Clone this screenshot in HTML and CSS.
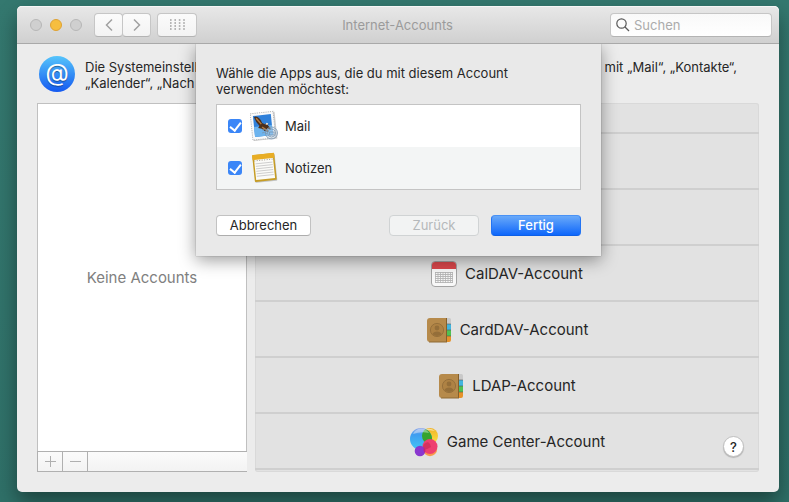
FILE: index.html
```html
<!DOCTYPE html>
<html lang="de">
<head>
    <meta charset="UTF-8">
    <meta name="viewport" content="width=device-width, initial-scale=1.0">
    <title>Internet-Accounts</title>
    <link rel="stylesheet" href="styles.css">
</head>
<body>

    <div class="window">
        <header class="titlebar">
            <div class="lights">
                <span class="light"></span>
                <span class="light light-minimize"></span>
                <span class="light"></span>
            </div>
            <div class="nav">
                <button type="button" class="tool-button" aria-label="Zurück">
                    <svg width="8" height="14" viewBox="0 0 8 14"><path d="M7 1.5 L1.5 7 L7 12.5"/></svg>
                </button>
                <button type="button" class="tool-button" aria-label="Vorwärts">
                    <svg width="8" height="14" viewBox="0 0 8 14"><path d="M1 1.5 L6.5 7 L1 12.5"/></svg>
                </button>
            </div>
            <button type="button" class="tool-button tool-grid" aria-label="Alle einblenden">
                <svg width="15" height="11" viewBox="0 0 15 11">
                    <path d="M0 1H15M0 4H15M0 7H15M0 10H15" stroke-width="1.4" stroke-dasharray="1.6 2.8"/>
                </svg>
            </button>
            <h1 class="title">Internet-Accounts</h1>
            <label class="search">
                <svg width="14" height="14" viewBox="0 0 14 14"><circle cx="5.5" cy="5.5" r="4.7"/><path d="M9 9 L13 13"/></svg>
                <input type="search" placeholder="Suchen" aria-label="Suchen">
            </label>
        </header>

        <main class="content">
            <div class="intro">
                <span class="at-icon">@</span>
                <p>Die Systemeinstell<br>„Kalender“, „Nach</p>
                <p class="intro-end">mit „Mail“, „Kontakte“,</p>
            </div>

            <div class="panes">
                <section class="accounts">
                    <div class="accounts-empty">Keine Accounts</div>
                    <div class="accounts-bar">
                        <button type="button" aria-label="Hinzufügen">
                            <svg width="11" height="11" viewBox="0 0 11 11"><path d="M5.5 0V11M0 5.5H11"/></svg>
                        </button>
                        <button type="button" aria-label="Entfernen">
                            <svg width="11" height="11" viewBox="0 0 11 11"><path d="M0 5.5H11"/></svg>
                        </button>
                    </div>
                </section>

                <section class="providers">
                    <ul class="provider-list">
                        <li class="provider-short"></li>
                        <li></li>
                        <li></li>
                        <li>
                            <button type="button" class="provider">
                                <svg width="26" height="26" viewBox="0 0 26 26">
                                    <rect x=".5" y=".5" width="25" height="25" rx="3.5" fill="#f8f8f8" stroke="#a3a3a3"/>
                                    <path d="M1 8V4Q1 1 4 1H22Q25 1 25 4V8Z" fill="#d9474b"/>
                                    <path d="M4 11.5H22M4 13.5H22M4 15.5H22M4 17.5H22M4 19.5H22M4 21.5H22" stroke="#bbb"/>
                                    <path d="M4.5 11V22M7 11V22M9.5 11V22M12 11V22M14.5 11V22M17 11V22M19.5 11V22M21.5 11V22" stroke="#b4b4b4" stroke-width=".8"/>
                                </svg>
                                <span>CalDAV-Account</span>
                            </button>
                        </li>
                        <li>
                            <button type="button" class="provider">
                                <svg width="26" height="26" viewBox="0 0 26 26">
                                    <rect x="16" y="1" width="9" height="6" rx="1.5" fill="#c9c9c9"/>
                                    <rect x="16" y="7" width="9" height="6" fill="#42b5df"/>
                                    <rect x="16" y="13" width="9" height="6" fill="#4fc252"/>
                                    <path d="M16 19H25V23Q25 25 23 25H16Z" fill="#e6922a"/>
                                    <path d="M20 7H25M20 13H25M20 19H25" stroke="#555" stroke-width=".6"/>
                                    <path d="M4 1H21V25H4Q1 25 1 22V4Q1 1 4 1Z" fill="#b68a4b"/>
                                    <path d="M20.5 1V25" stroke="#85602b"/>
                                    <path d="M3 25H21" stroke="#8f6a34"/>
                                    <circle cx="11" cy="13" r="6.6" fill="#ae8244" stroke="#8f6b38" stroke-width=".8"/>
                                    <circle cx="11" cy="11" r="2.4" fill="#946e39"/>
                                    <path d="M6.5 17Q7.500 14.5 11 14.5T15.500 17Q14 19 11 19T6.500 17Z" fill="#946e39"/>
                                </svg>
                                <span>CardDAV-Account</span>
                            </button>
                        </li>
                        <li>
                            <button type="button" class="provider">
                                <svg width="26" height="26" viewBox="0 0 26 26">
                                    <rect x="16" y="1" width="9" height="6" rx="1.5" fill="#c9c9c9"/>
                                    <rect x="16" y="7" width="9" height="6" fill="#42b5df"/>
                                    <rect x="16" y="13" width="9" height="6" fill="#4fc252"/>
                                    <path d="M16 19H25V23Q25 25 23 25H16Z" fill="#e6922a"/>
                                    <path d="M20 7H25M20 13H25M20 19H25" stroke="#555" stroke-width=".6"/>
                                    <path d="M4 1H21V25H4Q1 25 1 22V4Q1 1 4 1Z" fill="#b68a4b"/>
                                    <path d="M20.5 1V25" stroke="#85602b"/>
                                    <path d="M3 25H21" stroke="#8f6a34"/>
                                    <circle cx="11" cy="13" r="6.6" fill="#ae8244" stroke="#8f6b38" stroke-width=".8"/>
                                    <circle cx="11" cy="11" r="2.4" fill="#946e39"/>
                                    <path d="M6.5 17Q7.500 14.5 11 14.5T15.500 17Q14 19 11 19T6.500 17Z" fill="#946e39"/>
                                </svg>
                                <span>LDAP-Account</span>
                            </button>
                        </li>
                        <li>
                            <button type="button" class="provider">
                                <svg width="30" height="30" viewBox="0 0 30 30">
                                    <defs>
                                        <linearGradient id="gc-blue" x1="0" y1="0" x2="0" y2="1">
                                            <stop offset="0" stop-color="#8fa6e8"/>
                                            <stop offset=".3" stop-color="#3f9df0"/>
                                            <stop offset="1" stop-color="#43c6f5"/>
                                        </linearGradient>
                                        <linearGradient id="gc-yellow" x1="0" y1="0" x2="0" y2="1">
                                            <stop offset="0" stop-color="#f0b429"/>
                                            <stop offset="1" stop-color="#fbe23f"/>
                                        </linearGradient>
                                        <clipPath id="gc-clip"><circle cx="12" cy="12" r="11"/></clipPath>
                                    </defs>
                                    <circle cx="21" cy="9" r="8" fill="url(#gc-yellow)"/>
                                    <circle cx="12" cy="12" r="11" fill="url(#gc-blue)"/>
                                    <circle cx="21" cy="9" r="8" fill="#35a42c" clip-path="url(#gc-clip)"/>
                                    <circle cx="21" cy="22" r="7.2" fill="#f99a4c"/>
                                    <circle cx="21" cy="19.5" r="7.5" fill="#ee3f70"/>
                                    <path d="M14 19Q15 16 19 15Q22 17 22 20Q19 22 15 23Z" fill="#c42853" opacity=".6"/>
                                    <circle cx="11" cy="24" r="5.3" fill="#8a37cf"/>
                                    <path d="M14.5 20Q17 22 16 26Q14 24 14.5 20Z" fill="#c42477"/>
                                    <path d="M4 7Q6 2 12 1.5Q18 2 20 6Q12 4 4 7Z" fill="#fff" opacity=".4"/>
                                    <path d="M16 3Q21 0 26 4Q21 3 16 3Z" fill="#fff" opacity=".5"/>
                                </svg>
                                <span>Game Center-Account</span>
                            </button>
                        </li>
                    </ul>
                    <button type="button" class="help">?</button>
                </section>
            </div>
        </main>

        <form class="sheet" onsubmit="return false">
            <p>Wähle die Apps aus, die du mit diesem Account verwenden möchtest:</p>
            <div class="apps">
                <label class="app">
                    <input type="checkbox" checked>
                    <svg width="28" height="32" viewBox="0 0 28 32">
                        <g transform="rotate(-6 13 16)">
                            <rect x="2" y="3" width="24" height="27" fill="#000" opacity=".2"/>
                            <rect x="1.5" y="2.5" width="23" height="26.5" fill="#fafafa" stroke="#b9b9b9" stroke-dasharray="1.2 1"/>
                            <rect x="4" y="5" width="18" height="21" fill="#2f80da"/>
                            <rect x="4" y="16" width="18" height="10" fill="#6db4ee"/>
                            <path d="M5 6Q8 5 10 8Q12 10 12.5 13L15 14.5Q17 12.5 18.5 14L18 16Q20 18 20.5 20Q18 20 16.5 19L18 22.5Q14 22 11.5 18.5L8 17.5L9.5 15.5Q6 11 5 6Z" fill="#4b2f1c"/>
                            <path d="M7 7.5L11.5 14M12 17L17 21" stroke="#b57a3d" stroke-width="1.4"/>
                            <path d="M15.5 14.5L17 13.2L18.5 14L17.5 15.5Z" fill="#f5f1e8"/>
                        </g>
                        <g fill="none" stroke="#7793ae" stroke-width=".8">
                            <circle cx="21.5" cy="23" r="6" fill="#c4d9ec" fill-opacity=".35"/>
                            <circle cx="21.5" cy="23" r="4"/>
                            <path d="M12 20Q15 18 17 21M12 23Q15 21 17 24M19.500 22H24V25H19.500Z"/>
                        </g>
                    </svg>
                    <span>Mail</span>
                </label>
                <label class="app">
                    <input type="checkbox" checked>
                    <svg width="28" height="32" viewBox="0 0 28 32">
                        <g transform="rotate(-6 14 16)">
                            <rect x="4" y="3" width="22" height="27" rx="1" fill="#000" opacity=".2"/>
                            <rect x="3.5" y="2" width="22" height="27" rx="1" fill="#c79d25"/>
                            <rect x="5" y="6" width="19" height="21" fill="#fbfbf8"/>
                            <path d="M3.5 2H25.5V7H3.5Z" fill="#e8ad24"/>
                            <path d="M5 8H24" stroke="#a09a8a" stroke-dasharray="1 1.5"/>
                            <path d="M6 11H23M6 13.5H23M6 16H23M6 18.5H23M6 21H23M6 23.5H23" stroke="#c4c4c4" stroke-width=".8"/>
                        </g>
                    </svg>
                    <span>Notizen</span>
                </label>
            </div>
            <div class="actions">
                <button type="button" class="push push-cancel">Abbrechen</button>
                <button type="button" class="push" disabled>Zurück</button>
                <button type="submit" class="push push-default">Fertig</button>
            </div>
        </form>
    </div>

</body>
</html>
```

FILE: styles.css
```css
* {
    margin: 0;
    padding: 0;
    box-sizing: border-box;
}

body {
    font-family: Inter, 'Liberation Sans', sans-serif;
    font-size: 13px;
    line-height: 16px;
    color: #262626;
    background: linear-gradient(180deg, #34786f 0%, #2f7068 100%);
    min-height: 100vh;
    padding: 6px 10px 10px 17px;
    display: flex;
    overflow: hidden;
}

button,
input {
    font: inherit;
    color: inherit;
}

svg {
    display: block;
    flex: none;
    fill: none;
}

.window {
    flex: 1;
    display: flex;
    flex-direction: column;
    position: relative;
    background: #ececec;
    border-radius: 5px;
    box-shadow: 0 10px 20px rgba(0, 0, 0, 0.4);
}


.titlebar {
    display: flex;
    align-items: center;
    height: 38px;
    padding: 0 7px 0 13px;
    background: linear-gradient(180deg, #e8e8e8, #d0d0d0);
    border-bottom: 1px solid #a9a9a9;
    border-radius: 5px 5px 0 0;
    box-shadow: inset 0 1px 0 #f6f6f6;
    position: relative;
    z-index: 2;
}

.lights {
    display: flex;
    gap: 8px;
    margin-right: 12px;
}

.light {
    width: 12px;
    height: 12px;
    border-radius: 50%;
    background: #cfcfcf;
    border: 1px solid #b7b7b7;
}

.light-minimize {
    background: #f6be3f;
    border-color: #dfa233;
}

.nav {
    display: flex;
    margin-right: 6px;
}

.tool-button {
    display: flex;
    align-items: center;
    justify-content: center;
    width: 29px;
    height: 24px;
    background: linear-gradient(180deg, #fbfbfb, #f3f3f3);
    border: 1px solid #c6c6c6;
    border-bottom-color: #b4b4b4;
    border-radius: 4px;
    stroke: #a0a0a0;
    stroke-width: 1.5;
}

.nav .tool-button + .tool-button {
    margin-left: -1px;
}

.tool-grid {
    width: 40px;
}

.title {
    flex: 1;
    text-align: center;
    font-size: 13px;
    font-weight: 400;
    color: #9b9b9b;
    padding-left: 17px;
    padding-right: 29px;
}

.search {
    display: flex;
    align-items: center;
    gap: 4px;
    width: 162px;
    height: 24px;
    padding: 0 5px;
    background: linear-gradient(180deg, #f9f9f9, #fff);
    border: 1px solid #c6c6c6;
    border-bottom-color: #b4b4b4;
    border-radius: 4px;
    stroke: #5a5a5a;
    stroke-width: 1.2;
}

.search input {
    flex: 1;
    min-width: 0;
    border: none;
    outline: none;
    background: none;
}

.search input::placeholder {
    color: #ababab;
}


.content {
    flex: 1;
    display: flex;
    flex-direction: column;
    padding: 12px 20px 20px;
}

.intro {
    display: flex;
    gap: 10px;
    height: 47px;
    padding: 0 22px 0 2px;
    white-space: nowrap;
}

.intro p {
    padding-top: 3px;
}

.intro .intro-end {
    margin-left: auto;
}

.at-icon {
    flex: none;
    width: 36px;
    height: 36px;
    border-radius: 50%;
    background: linear-gradient(180deg, #55c4fb, #1459f0);
    color: #fff;
    font-size: 24px;
    line-height: 34px;
    text-align: center;
    text-shadow: 0 1px 1px rgba(0, 0, 0, 0.4);
}

.panes {
    flex: 1;
    display: flex;
    gap: 8px;
}

.accounts {
    display: flex;
    flex-direction: column;
    width: 210px;
}

.accounts-empty {
    flex: 1;
    display: flex;
    align-items: center;
    justify-content: center;
    background: #fff;
    border: 1px solid #c0c0c0;
    border-bottom: none;
    font-size: 15px;
    color: #808080;
}

.accounts-bar {
    display: flex;
    height: 21px;
    background: linear-gradient(180deg, #fbfbfb, #f3f3f3);
    border: 1px solid #b0b0b0;
    border-right: none;
}

.accounts-bar button {
    display: flex;
    align-items: center;
    justify-content: center;
    width: 25px;
    background: none;
    border: none;
    border-right: 1px solid #b0b0b0;
    stroke: #b0b0b0;
}

.providers {
    flex: 1;
    position: relative;
    background: #e2e2e2;
    border-radius: 3px;
    box-shadow: inset 0 0 0 1px #d9d9d9;
}

.provider-list {
    list-style: none;
}

.provider-list li {
    height: 56px;
    border-bottom: 2px solid #cfcfcf;
}

.provider-list .provider-short {
    height: 31px;
}

.provider {
    display: flex;
    align-items: center;
    justify-content: center;
    gap: 8px;
    width: 100%;
    height: 100%;
    padding-top: 2px;
    background: none;
    border: none;
    font-size: 15px;
}

.help {
    position: absolute;
    right: 15px;
    bottom: 15px;
    width: 21px;
    height: 21px;
    border: 1px solid #c0c0c0;
    border-radius: 50%;
    background: #fff;
    box-shadow: 0 1px 1px rgba(0, 0, 0, 0.2);
    font-size: 13px;
    font-weight: 500;
}


.sheet {
    position: absolute;
    top: 38px;
    left: 50%;
    z-index: 1;
    width: 405px;
    margin-left: -202px;
    padding: 21px 20px 20px;
    background: #e9e9e9;
    box-shadow: 0 0 1px rgba(0, 0, 0, 0.4), 0 4px 16px rgba(0, 0, 0, 0.4);
}

.sheet p {
    width: 320px;
}

.apps {
    margin: 7px 0 25px;
    background: #fff;
    border: 1px solid #c4c4c4;
}

.app {
    display: flex;
    align-items: center;
    height: 42px;
    padding: 0 11px;
}

.app:nth-child(even) {
    background: #f3f5f5;
}

.app svg {
    margin: 0 7px 0 8px;
}

.app input {
    appearance: none;
    display: grid;
    place-items: center;
    width: 14px;
    height: 14px;
    border-radius: 3px;
    background: #3b86f7;
}

.app input:checked::after {
    content: '';
    width: 5px;
    height: 9px;
    margin-bottom: 2px;
    border: solid #fff;
    border-width: 0 2px 2px 0;
    transform: rotate(38deg);
}

.actions {
    display: flex;
    gap: 12px;
}

.push {
    width: 90px;
    height: 21px;
    padding-bottom: 1px;
    border: 1px solid #c2c2c2;
    border-bottom-color: #adadad;
    border-radius: 4px;
    background: #fff;
}

.push-cancel {
    width: 95px;
    margin-right: auto;
}

.push:disabled {
    color: #b5b8ba;
    background: #f2f3f3;
    border-color: #d0d3d4;
}

.push-default {
    color: #fff;
    font-weight: 500;
    background: linear-gradient(180deg, #69a9f9, #0e67fb);
    border-color: #4a92f5 #2374f3 #0d5fe6;
}
```
